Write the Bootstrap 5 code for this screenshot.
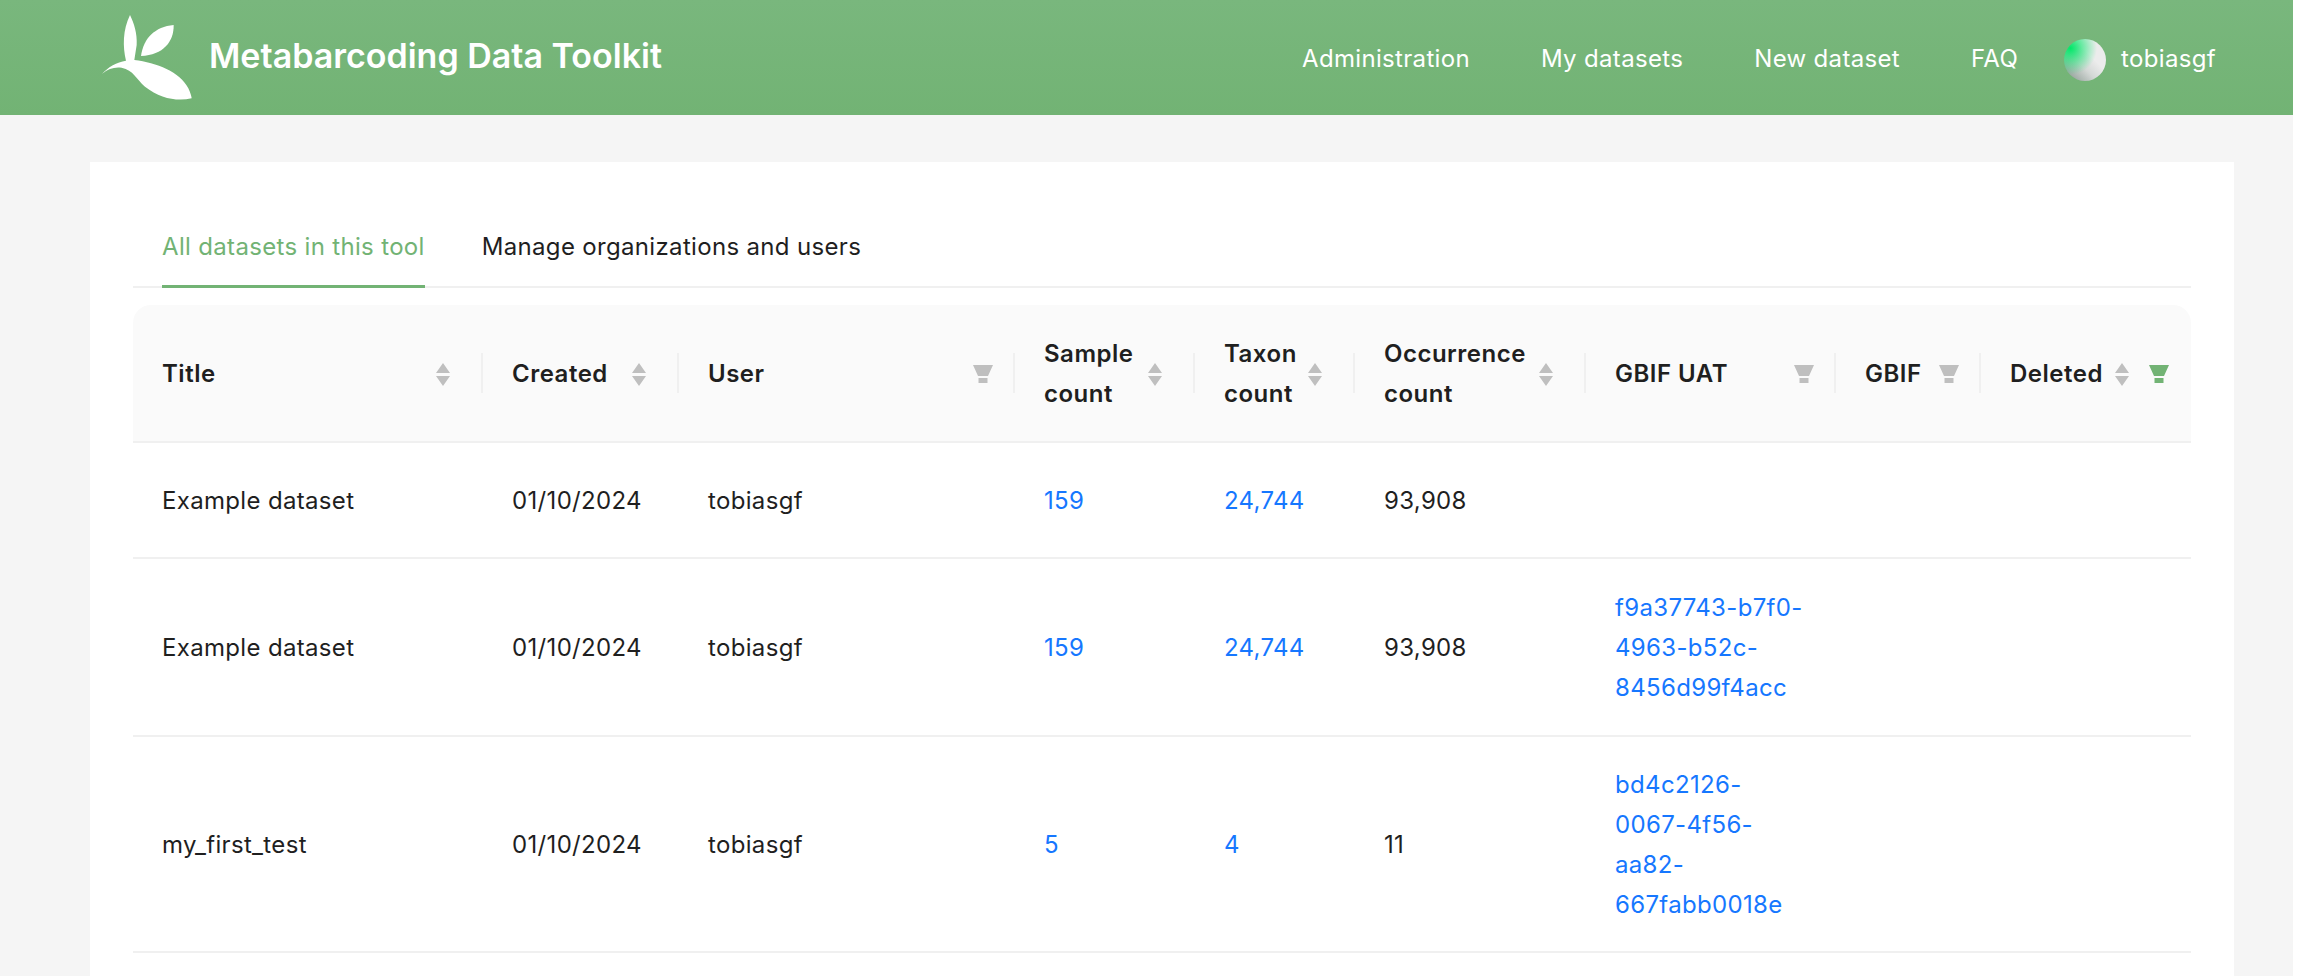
<!DOCTYPE html>
<html lang="en">
<head>
    <meta charset="UTF-8">
    <meta name="viewport" content="width=device-width, initial-scale=1.0">
    <title>Metabarcoding Data Toolkit</title>
    <link href="https://cdn.jsdelivr.net/npm/bootstrap@5.3.0/dist/css/bootstrap.min.css" rel="stylesheet">
    <style>
        html, body {
            background: #fff;
            height: 976px;
            overflow: hidden;
        }
        body {
            font-family: Inter, "Liberation Sans", sans-serif;
            font-size: 24px;
            letter-spacing: .33px;
            color: #1f1f1f;
        }
        .page-wrap {
            width: 2293px;
            height: 976px;
            background: #f5f5f5;
            overflow: hidden;
        }
        .top-bar {
            height: 115px;
            padding: 0 77px 0 80px;
            background: linear-gradient(180deg, #79b77d 0%, #72b374 100%);
        }
        .brand-link {
            color: #fff;
            font-size: 34px;
            font-weight: 600;
            letter-spacing: 0;
            text-decoration: none;
        }
        .brand-link svg {
            width: 129px;
            height: 100px;
            margin-top: 5px;
        }
        .brand-link span {
            margin-bottom: 4px;
        }
        .top-link {
            color: #fff;
            font-size: 24px;
            text-decoration: none;
            margin-right: 71px;
            margin-top: 2px;
        }
        .top-link.faq-link {
            margin-right: 46px;
        }
        .user-chip {
            color: #fff;
            gap: 15px;
            margin-top: 2px;
        }
        .user-dot {
            width: 42px;
            height: 42px;
            margin-top: 2px;
            border-radius: 50%;
            background:
                radial-gradient(circle at 15% 22%, #00e868 0%, rgba(0, 232, 104, 0) 55%),
                linear-gradient(225deg, #ececec 38%, #d4d8d6 60%, #7f9087 100%);
        }
        .main-sheet {
            margin: 47px 59px 0 90px;
            padding: 42px 43px 0 43px;
            background: #fff;
            height: 900px;
        }
        .tab-strip {
            border-bottom: 2px solid #f0f0f0;
            height: 84px;
            padding-left: 29px;
            gap: 57px;
        }
        .tab-item {
            color: #1f1f1f;
            text-decoration: none;
            height: 84px;
            line-height: 85px;
            flex: none;
        }
        .tab-item.is-active {
            color: #72b374;
            border-bottom: 3px solid #72b374;
        }
        .data-table {
            width: 2058px;
            margin-top: 17px;
            table-layout: fixed;
            border-collapse: separate;
            border-spacing: 0;
        }
        .data-table th {
            background: #fafafa;
            font-weight: 600;
            letter-spacing: .5px;
            height: 138px;
            line-height: 40px;
            padding: 2px 0 0 29px;
            position: relative;
            border-bottom: 2px solid #f0f0f0;
        }
        .data-table th:first-child { border-top-left-radius: 18px; }
        .data-table th:last-child { border-top-right-radius: 18px; }
        .data-table th + th::before {
            content: "";
            position: absolute;
            left: -2px;
            top: 50%;
            width: 2px;
            height: 40px;
            margin-top: -20px;
            background: #f0f0f0;
        }
        .data-table td {
            padding: 2px 0 0 29px;
            line-height: 40px;
            border-bottom: 2px solid #f0f0f0;
            vertical-align: middle;
        }
        .data-table td a {
            color: #1677ff;
            text-decoration: none;
        }
        .head-cell {
            padding-right: 32px;
        }
        .head-cell.has-filter {
            padding-right: 22px;
        }
        .head-icons {
            gap: 19px;
        }
        .sort-mark {
            width: 16px;
            height: 25px;
            flex: none;
        }
        .funnel-mark {
            width: 20px;
            height: 18px;
            flex: none;
        }
        .row-short { height: 116px; }
        .row-mid { height: 178px; }
        .row-tall { height: 216px; }
    </style>
</head>
<body>
    <div class="page-wrap">
        <nav class="top-bar d-flex align-items-center">
            <a href="#" class="brand-link d-flex align-items-center">
                <svg viewBox="0 0 387 300"><path fill="#fff" d="M150 15C162 40 172 70 170 105L163 150C230 158 300 185 325 235C331 248 334 258 335 265C290 275 240 265 195 230C170 208 160 180 125 173C105 170 85 175 66 192C85 170 110 157 138 152C128 110 128 60 150 15Z"/><path fill="#fff" d="M281 45C282 95 250 135 183 138C190 85 225 50 281 45Z"/></svg>
                <span>Metabarcoding Data Toolkit</span>
            </a>
            <div class="ms-auto d-flex align-items-center">
                <a href="#" class="top-link">Administration</a>
                <a href="#" class="top-link">My datasets</a>
                <a href="#" class="top-link">New dataset</a>
                <a href="#" class="top-link faq-link">FAQ</a>
                <div class="user-chip d-flex align-items-center"><span class="user-dot"></span><span>tobiasgf</span></div>
            </div>
        </nav>
        <div class="main-sheet">
            <div class="tab-strip d-flex">
                <a href="#" class="tab-item is-active">All datasets in this tool</a>
                <a href="#" class="tab-item">Manage organizations and users</a>
            </div>
            <table class="data-table">
                <colgroup>
                    <col style="width:350px"><col style="width:196px"><col style="width:336px"><col style="width:180px"><col style="width:160px"><col style="width:231px"><col style="width:250px"><col style="width:145px"><col style="width:210px">
                </colgroup>
                <thead>
                    <tr>
                        <th><div class="head-cell d-flex align-items-center justify-content-between"><span>Title</span><svg class="sort-mark" viewBox="0 0 16 25"><path fill="#bfbfbf" d="M8 1l7 10H1zM8 24L1 14h14z"/></svg></div></th>
                        <th><div class="head-cell d-flex align-items-center justify-content-between"><span>Created</span><svg class="sort-mark" viewBox="0 0 16 25"><path fill="#bfbfbf" d="M8 1l7 10H1zM8 24L1 14h14z"/></svg></div></th>
                        <th><div class="head-cell has-filter d-flex align-items-center justify-content-between"><span>User</span><svg class="funnel-mark" viewBox="0 0 20 18"><path fill="#bfbfbf" d="M0 0h20l-5 11H5zM5.500 13h9v5h-9z"/></svg></div></th>
                        <th><div class="head-cell d-flex align-items-center justify-content-between"><span>Sample<br>count</span><svg class="sort-mark" viewBox="0 0 16 25"><path fill="#bfbfbf" d="M8 1l7 10H1zM8 24L1 14h14z"/></svg></div></th>
                        <th><div class="head-cell d-flex align-items-center justify-content-between"><span>Taxon<br>count</span><svg class="sort-mark" viewBox="0 0 16 25"><path fill="#bfbfbf" d="M8 1l7 10H1zM8 24L1 14h14z"/></svg></div></th>
                        <th><div class="head-cell d-flex align-items-center justify-content-between"><span>Occurrence<br>count</span><svg class="sort-mark" viewBox="0 0 16 25"><path fill="#bfbfbf" d="M8 1l7 10H1zM8 24L1 14h14z"/></svg></div></th>
                        <th><div class="head-cell has-filter d-flex align-items-center justify-content-between"><span>GBIF UAT</span><svg class="funnel-mark" viewBox="0 0 20 18"><path fill="#bfbfbf" d="M0 0h20l-5 11H5zM5.500 13h9v5h-9z"/></svg></div></th>
                        <th><div class="head-cell has-filter d-flex align-items-center justify-content-between"><span>GBIF</span><svg class="funnel-mark" viewBox="0 0 20 18"><path fill="#bfbfbf" d="M0 0h20l-5 11H5zM5.500 13h9v5h-9z"/></svg></div></th>
                        <th><div class="head-cell has-filter d-flex align-items-center justify-content-between"><span>Deleted</span><span class="head-icons d-flex align-items-center"><svg class="sort-mark" viewBox="0 0 16 25"><path fill="#bfbfbf" d="M8 1l7 10H1zM8 24L1 14h14z"/></svg><svg class="funnel-mark" viewBox="0 0 20 18"><path fill="#72b374" d="M0 0h20l-5 11H5zM5.500 13h9v5h-9z"/></svg></span></div></th>
                    </tr>
                </thead>
                <tbody>
                    <tr class="row-short"><td>Example dataset</td><td>01/10/2024</td><td>tobiasgf</td><td><a href="#">159</a></td><td><a href="#">24,744</a></td><td>93,908</td><td></td><td></td><td></td></tr>
                    <tr class="row-mid"><td>Example dataset</td><td>01/10/2024</td><td>tobiasgf</td><td><a href="#">159</a></td><td><a href="#">24,744</a></td><td>93,908</td><td><a href="#">f9a37743-b7f0-<br>4963-b52c-<br>8456d99f4acc</a></td><td></td><td></td></tr>
                    <tr class="row-tall"><td>my_first_test</td><td>01/10/2024</td><td>tobiasgf</td><td><a href="#">5</a></td><td><a href="#">4</a></td><td>11</td><td><a href="#">bd4c2126-<br>0067-4f56-<br>aa82-<br>667fabb0018e</a></td><td></td><td></td></tr>
                </tbody>
            </table>
        </div>
    </div>
    <script src="https://cdn.jsdelivr.net/npm/bootstrap@5.3.0/dist/js/bootstrap.bundle.min.js"></script>
</body>
</html>
